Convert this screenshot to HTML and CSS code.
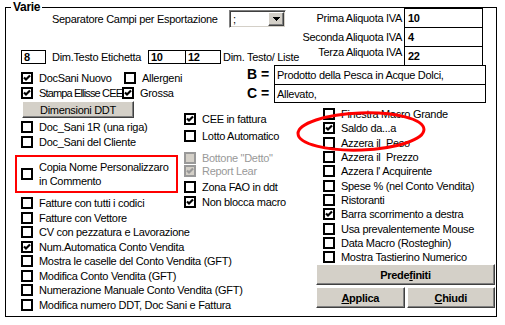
FILE: index.html
```html
<!DOCTYPE html>
<html lang="it">
<head>
    <meta charset="UTF-8" />
    <meta name="viewport" content="width=device-width, initial-scale=1.0" />
    <title>Varie</title>
    <link rel="stylesheet" href="styles.css">
</head>
<body>
    <div class="window">
        <div class="frame">
            <span class="frame-title">Varie</span>

            <div class="top">
                <div class="top-left">
                    <div class="sep-row">
                        <span class="sep-label">Separatore Campi per Esportazione</span>
                        <div class="combo">
                            <span class="combo-value">;</span>
                            <span class="combo-btn">
                                <svg viewBox="0 0 7 4" width="7" height="4"><path d="M0 0H7L3.5 4Z" /></svg>
                            </span>
                        </div>
                    </div>
                    <div class="dim-row">
                        <div class="field num field-8">8</div>
                        <span class="dim-label">Dim.Testo Etichetta</span>
                        <div class="field num field-10">10</div>
                        <div class="field num field-12">12</div>
                        <span class="dim-label2">Dim. Testo/ Liste</span>
                    </div>
                </div>
                <div class="iva">
                    <span class="iva-label">Prima Aliquota IVA</span>
                    <div class="field num iva-field">10</div>
                    <span class="iva-label">Seconda Aliquota IVA</span>
                    <div class="field num iva-field">4</div>
                    <span class="iva-label terza">Terza Aliquota IVA</span>
                    <div class="field num iva-field last">22</div>
                </div>
            </div>

            <div class="band">
                <div class="opt-grid">
                    <div class="chk"><span class="box"><svg viewBox="0 0 8 8"><path d="M1 3.5 3 5.5 7 1.5" /></svg></span>DocSani Nuovo</div>
                    <div class="chk"><span class="box"></span>Allergeni</div>
                    <div class="chk"><span class="box"><svg viewBox="0 0 8 8"><path d="M1 3.5 3 5.5 7 1.5" /></svg></span><span class="tight">Stampa Ellisse CEEI</span></div>
                    <div class="chk shift"><span class="box"><svg viewBox="0 0 8 8"><path d="M1 3.5 3 5.5 7 1.5" /></svg></span>Grossa</div>
                </div>
                <div class="bc-labels">
                    <span>B =</span>
                    <span>C =</span>
                </div>
                <div class="bc-fields">
                    <div class="field text">Prodotto della Pesca in Acque Dolci,</div>
                    <div class="field text second">Allevato,</div>
                </div>
            </div>

            <div class="columns">
                <div class="col col-left">
                    <button class="btn btn-dim" type="button">Dimensioni DDT</button>
                    <div class="chk first"><span class="box"></span>Doc_Sani 1R (una riga)</div>
                    <div class="chk"><span class="box"></span>Doc_Sani del Cliente</div>
                    <div class="chk two-line"><span class="box"></span><span>Copia Nome Personalizzaro<br>in Commento</span></div>
                    <div class="chk after-two"><span class="box"></span>Fatture con tutti i codici</div>
                    <div class="chk"><span class="box"></span>Fatture con Vettore</div>
                    <div class="chk"><span class="box"></span>CV con pezzatura e Lavorazione</div>
                    <div class="chk"><span class="box"><svg viewBox="0 0 8 8"><path d="M1 3.5 3 5.5 7 1.5" /></svg></span>Num.Automatica Conto Vendita</div>
                    <div class="chk"><span class="box"></span>Mostra le caselle del Conto Vendita (GFT)</div>
                    <div class="chk"><span class="box"></span>Modifica Conto Vendita (GFT)</div>
                    <div class="chk"><span class="box"></span>Numerazione Manuale Conto Vendita (GFT)</div>
                    <div class="chk"><span class="box"></span>Modifica numero DDT, Doc Sani e Fattura</div>
                </div>

                <div class="col col-mid">
                    <div class="chk"><span class="box"><svg viewBox="0 0 8 8"><path d="M1 3.5 3 5.5 7 1.5" /></svg></span>CEE in fattura</div>
                    <div class="chk m-lotto"><span class="box"></span>Lotto Automatico</div>
                    <div class="chk disabled m-bottone"><span class="box"></span>Bottone "Detto"</div>
                    <div class="chk disabled m-report"><span class="box"><svg viewBox="0 0 8 8"><path d="M1 3.5 3 5.5 7 1.5" /></svg></span>Report Lear</div>
                    <div class="chk m-zona"><span class="box"></span>Zona FAO in ddt</div>
                    <div class="chk"><span class="box"><svg viewBox="0 0 8 8"><path d="M1 3.5 3 5.5 7 1.5" /></svg></span>Non blocca macro</div>
                </div>

                <div class="col col-right">
                    <div class="chk"><span class="box"></span>Finestra Macro Grande</div>
                    <div class="chk"><span class="box"><svg viewBox="0 0 8 8"><path d="M1 3.5 3 5.5 7 1.5" /></svg></span>Saldo da...a</div>
                    <div class="chk"><span class="box"></span>Azzera il  Peso</div>
                    <div class="chk"><span class="box"></span>Azzera il  Prezzo</div>
                    <div class="chk"><span class="box"></span>Azzera l' Acquirente</div>
                    <div class="chk"><span class="box"></span>Spese % (nel Conto Vendita)</div>
                    <div class="chk"><span class="box"></span>Ristoranti</div>
                    <div class="chk"><span class="box"><svg viewBox="0 0 8 8"><path d="M1 3.5 3 5.5 7 1.5" /></svg></span>Barra scorrimento a destra</div>
                    <div class="chk"><span class="box"></span>Usa prevalentemente Mouse</div>
                    <div class="chk"><span class="box"></span>Data Macro (Rosteghin)</div>
                    <div class="chk"><span class="box"></span>Mostra Tastierino Numerico</div>

                    <button class="btn btn-bold btn-wide" type="button">Prede<u>f</u>initi</button>
                    <div class="btn-row">
                        <button class="btn btn-bold" type="button"><u>A</u>pplica</button>
                        <button class="btn btn-bold" type="button"><u>C</u>hiudi</button>
                    </div>
                </div>
            </div>
        </div>

        <!-- annotazioni rosse -->
        <div class="mark-rect"></div>
        <svg class="mark-ellipse" viewBox="0 0 140 50" width="140" height="50">
            <ellipse cx="70" cy="25.5" rx="63" ry="18.5" transform="rotate(-2 70 25.5)" />
        </svg>
    </div>
</body>
</html>
```

FILE: styles.css
```css
body {
    margin: 0;
    background: #ffffff;
    color: #000;
    font-family: "Liberation Sans", Arial, sans-serif;
    font-size: 11px;
    letter-spacing: -0.3px;
}
.window {
    position: relative;
    width: 505px;
    height: 325px;
    overflow: hidden;
}
.frame {
    position: relative;
    box-sizing: border-box;
    width: 492px;
    height: 310px;
    margin: 7px 0 0 5px;
    border: 1px solid #000;
}
.frame-title {
    position: absolute;
    top: -8px;
    left: 5px;
    padding: 0 2px;
    background: #fff;
    font-size: 12px;
    font-weight: bold;
    line-height: 14px;
}

/* campi */
.field {
    box-sizing: border-box;
    border: 1px solid #000;
    background: #fff;
    padding-left: 2px;
    white-space: nowrap;
    overflow: hidden;
}
.field.num {
    font-weight: bold;
}

/* parte alta */
.top {
    display: flex;
    justify-content: space-between;
    height: 57px;
}
.sep-row {
    display: flex;
    align-items: center;
    height: 18px;
    margin-top: 2px;
}
.sep-label {
    width: 177px;
    margin-left: 46px;
    white-space: nowrap;
}
.combo {
    display: flex;
    align-items: center;
    box-sizing: border-box;
    width: 57px;
    height: 18px;
    border: 1px solid;
    border-color: #808080 #ffffff #ffffff #808080;
    box-shadow: inset 1px 1px #404040, inset -1px -1px #d4d0c8;
    background: #fff;
}
.combo-value {
    flex: 1;
    padding-left: 3px;
    line-height: 14px;
}
.combo-btn {
    display: flex;
    align-items: center;
    justify-content: center;
    box-sizing: border-box;
    width: 16px;
    height: 14px;
    margin-right: 1px;
    background: #d4d0c8;
    border: 1px solid;
    border-color: #ffffff #404040 #404040 #ffffff;
    box-shadow: inset -1px -1px #808080;
}
.combo-btn path {
    fill: #000;
    shape-rendering: crispEdges;
}
.dim-row {
    display: flex;
    align-items: center;
    height: 14px;
    margin-top: 22px;
}
.dim-row .field {
    height: 14px;
    line-height: 12px;
}
.field-8 {
    width: 25px;
    margin-left: 15px;
}
.dim-label {
    width: 96px;
    margin-left: 6px;
    white-space: nowrap;
}
.field-10 {
    width: 38px;
}
.field-12 {
    width: 36px;
    margin-left: -1px;
}
.dim-label2 {
    margin-left: 2px;
    white-space: nowrap;
}
.iva {
    display: grid;
    grid-template-columns: auto 79px;
    grid-template-rows: 19px 19px 19px;
    column-gap: 2px;
    margin-right: 13px;
}
.iva-label {
    justify-self: end;
    align-self: center;
    white-space: nowrap;
}
.iva-label.terza {
    align-self: start;
}
.iva-field {
    height: 20px;
    line-height: 18px;
    padding-left: 3px;
}

/* fascia B / C */
.band {
    display: flex;
    height: 36px;
}
.opt-grid {
    display: grid;
    grid-template-columns: 103px auto;
    grid-auto-rows: 13px;
    row-gap: 2px;
    width: 226px;
    margin-left: 15px;
    padding-top: 6px;
}
.opt-grid .chk {
    height: 13px;
}
.opt-grid .shift {
    margin-left: -2px;
}
.tight {
    letter-spacing: -0.85px;
}
.bc-labels {
    display: flex;
    flex-direction: column;
    width: 27px;
    font-size: 14px;
    font-weight: bold;
    letter-spacing: 0;
}
.bc-labels span {
    height: 19px;
    line-height: 19px;
}
.bc-fields {
    width: 212px;
}
.bc-fields .field {
    height: 20px;
    line-height: 18px;
}
.bc-fields .second {
    height: 19px;
    margin-top: -1px;
}

/* caselle di controllo */
.chk {
    display: flex;
    align-items: center;
    height: 14.5px;
    white-space: pre;
}
.box {
    display: flex;
    align-items: center;
    justify-content: center;
    flex: none;
    box-sizing: border-box;
    width: 12px;
    height: 12px;
    margin-right: 6px;
    border: 2px solid #000;
    background: #fff;
}
.box svg {
    width: 8px;
    height: 8px;
}
.box path {
    fill: none;
    stroke: #000;
    stroke-width: 2.2;
}
.chk.disabled {
    color: #999;
}
.chk.disabled .box {
    border-color: #999;
    background: #d4d0c8;
}
.chk.disabled .box path {
    stroke: #999;
}

/* colonne */
.columns {
    display: grid;
    grid-template-columns: 163px 132px 179px;
    padding-left: 15px;
}
.col {
    display: flex;
    flex-direction: column;
}
.col-left .first {
    margin-top: 2px;
}
.chk.two-line {
    height: 28px;
    line-height: 14px;
    margin-top: 11px;
    white-space: nowrap;
}
.chk.after-two {
    margin-top: 8px;
}
.col-mid {
    padding-top: 11px;
}
.m-lotto {
    margin-top: 2px;
}
.m-bottone {
    margin-top: 8px;
}
.m-report {
    margin-top: -2px;
}
.m-zona {
    margin-top: 2px;
}
.col-right {
    padding-top: 6px;
}
.col-right .chk {
    height: 14.3px;
    padding-left: 7px;
}

/* pulsanti */
.btn {
    display: flex;
    align-items: center;
    justify-content: center;
    box-sizing: border-box;
    padding: 0;
    background: #d4d0c8;
    border: 1px solid;
    border-color: #ffffff #404040 #404040 #ffffff;
    box-shadow: inset -1px -1px #808080;
    font-family: inherit;
    font-size: 11px;
    letter-spacing: -0.3px;
    color: #000;
}
.btn-dim {
    width: 112px;
    height: 17px;
    margin-left: 1px;
}
.btn-bold {
    font-weight: bold;
}
.btn-wide {
    width: 179px;
    height: 21px;
}
.btn-row {
    display: flex;
    gap: 2px;
    margin-top: 2px;
}
.btn-row .btn {
    width: 89px;
    height: 21px;
}

/* annotazioni */
.mark-rect {
    position: absolute;
    left: 15px;
    top: 155px;
    box-sizing: border-box;
    width: 163px;
    height: 38px;
    border: 2px solid #ff0000;
}
.mark-ellipse {
    position: absolute;
    left: 291px;
    top: 106px;
}
.mark-ellipse ellipse {
    fill: none;
    stroke: #ff0000;
    stroke-width: 3;
}
```
